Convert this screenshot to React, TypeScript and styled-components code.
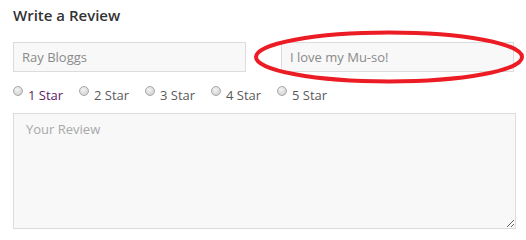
import React from "react";
import styled, { createGlobalStyle } from "styled-components";

const Global = createGlobalStyle`
  html, body { margin: 0; padding: 0; background: #fff; }
  body { font-family: "Open Sans", "Liberation Sans", sans-serif; }
`;

const Form = styled.form`
  position: relative;
  width: 526px;
  height: 240px;
  box-sizing: border-box;
  padding: 5px 10px 0 13px;
  display: flex;
  flex-direction: column;
`;

const Title = styled.h3`
  margin: 0;
  font-size: 15px;
  line-height: 20px;
  font-weight: 600;
  color: #333;
`;

const Row = styled.div`
  display: flex;
  gap: 35px;
  margin-top: 17px;
`;

const Field = styled.input`
  width: 233px;
  height: 30px;
  box-sizing: border-box;
  border: 1px solid #dcdcdc;
  background: #f8f8f8;
  padding: 0 8px;
  font-family: inherit;
  font-size: 13px;
  color: #8a8a8a;
  outline: none;
  &::placeholder { color: #8a8a8a; }
`;

const Stars = styled.div`
  display: flex;
  margin-top: 15px;
  height: 16px;
  align-items: flex-start;
`;

const StarLabel = styled.label<{ $active?: boolean }>`
  display: flex;
  align-items: flex-start;
  width: 66px;
  font-size: 13px;
  line-height: 16px;
  color: ${(p) => (p.$active ? "#5a2461" : "#5a5a5a")};
`;

const Radio = styled.input`
  appearance: none;
  -webkit-appearance: none;
  width: 10px;
  height: 10px;
  margin: -1px 5px 0 0;
  border-radius: 50%;
  border: 1px solid #a8a8a8;
  background: radial-gradient(circle at 40% 35%, #f4f4f4 0%, #d6d6d6 70%, #c4c4c4 100%);
  box-sizing: border-box;
  flex: none;
`;

const Review = styled.textarea`
  margin-top: 10px;
  width: 503px;
  height: 116px;
  box-sizing: border-box;
  border: 1px solid #dcdcdc;
  background: #f8f8f8;
  padding: 6px 12px;
  font-family: inherit;
  font-size: 13px;
  line-height: 18px;
  color: #8a8a8a;
  outline: none;
  resize: both;
  &::placeholder { color: #a8a8a8; }
`;

const Circle = styled.svg`
  position: absolute;
  left: 253px;
  top: 30px;
  pointer-events: none;
`;

export default function App() {
  return (
    <>
      <Global />
      <Form onSubmit={(e) => e.preventDefault()}>
        <Title>Write a Review</Title>
        <Row>
          <Field defaultValue="Ray Bloggs" />
          <Field defaultValue="I love my Mu-so!" />
        </Row>
        <Stars>
          {[1, 2, 3, 4, 5].map((n) => (
            <StarLabel key={n} $active={n === 1}>
              <Radio type="radio" name="rating" value={n} />
              {n} Star
            </StarLabel>
          ))}
        </Stars>
        <Review placeholder="Your Review" />
        <Circle width="272" height="54" viewBox="0 0 272 54">
          <ellipse cx="136" cy="27" rx="133" ry="24.5" fill="none" stroke="#ec1c24" strokeWidth="4" />
        </Circle>
      </Form>
    </>
  );
}
